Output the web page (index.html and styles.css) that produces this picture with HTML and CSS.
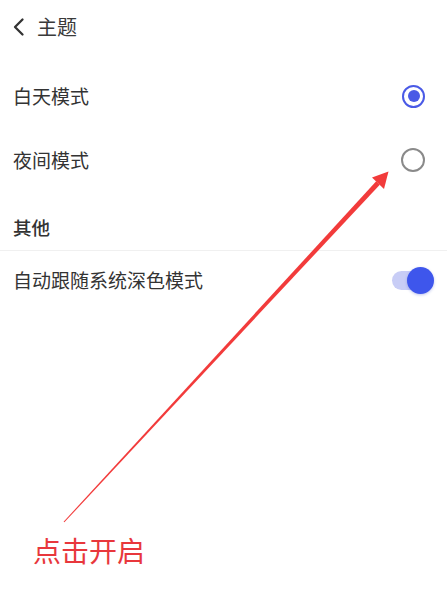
FILE: index.html
```html
<!DOCTYPE html>
<html lang="zh-CN">
<head>
<meta charset="utf-8">
<title>主题</title>
<link rel="stylesheet" href="styles.css">
</head>
<body>
<div class="page">
  <header class="header">
    <svg class="back" width="14" height="20" viewBox="0 0 14 20"><path d="M10.5 2.5 L3 10 L10.5 17.5" fill="none" stroke="#333" stroke-width="2.3" stroke-linecap="round" stroke-linejoin="round"/></svg>
    <span class="title">主题</span>
  </header>
  <div class="row first">
    <span class="label">白天模式</span>
    <span class="radio checked"></span>
  </div>
  <div class="row">
    <span class="label">夜间模式</span>
    <span class="radio"></span>
  </div>
  <div class="section">其他</div>
  <div class="row toggle-row">
    <span class="label">自动跟随系统深色模式</span>
    <span class="switch"><span class="knob"></span></span>
  </div>

  <svg class="arrow" width="447" height="603" viewBox="0 0 447 603">
    <polygon points="63.6,521.7 64.4,522.3 379.8,184.7 376.2,181.3" fill="#f23b3b"/>
    <polygon points="388.5,171.5 372,177.5 384,189" fill="#f23b3b"/>
  </svg>
  <div class="note">点击开启</div>
</div>
</body>
</html>
```
FILE: styles.css
```css
html, body {
  margin: 0;
  padding: 0;
  background: #ffffff;
}
.page {
  position: relative;
  width: 447px;
  height: 603px;
  overflow: hidden;
  font-family: "Noto Sans CJK SC", "Noto Sans", sans-serif;
  color: #333333;
}
.header {
  height: 54px;
  display: flex;
  align-items: center;
  padding-left: 12px;
  gap: 11px;
}
.back {
  display: block;
}
.title {
  font-size: 20px;
  line-height: 26px;
  color: #3a3a3a;
}
.row {
  height: 64px;
  display: flex;
  align-items: center;
  justify-content: space-between;
  padding: 0 22px 0 13px;
}
.row.first {
  margin-top: 10px;
}
.label {
  font-size: 19px;
  line-height: 26px;
}
.radio {
  width: 20px;
  height: 20px;
  border: 2px solid #8a8a8a;
  border-radius: 50%;
  box-sizing: content-box;
  display: flex;
  align-items: center;
  justify-content: center;
}
.radio.checked {
  border: 2.5px solid #4a5ae6;
  width: 19px;
  height: 19px;
}
.radio.checked::after {
  content: "";
  width: 12px;
  height: 12px;
  border-radius: 50%;
  background: #4a5ae6;
}
.section {
  font-size: 18.5px;
  font-weight: 500;
  line-height: 26px;
  padding: 22px 13px 10px;
  border-bottom: 1px solid #f0f0f0;
}
.toggle-row {
  height: 58px;
  padding-right: 13px;
}
.switch {
  position: relative;
  width: 34px;
  height: 19px;
  border-radius: 10px;
  background: #c8cdf6;
  margin-right: 8px;
}
.knob {
  position: absolute;
  right: -8px;
  top: -4px;
  width: 27px;
  height: 27px;
  border-radius: 50%;
  background: #3e56ec;
  box-shadow: 0 1px 3px rgba(40, 60, 200, 0.3);
}
.arrow {
  position: absolute;
  left: 0;
  top: 0;
}
.note {
  position: absolute;
  left: 33px;
  top: 530px;
  font-size: 28px;
  line-height: 40px;
  color: #e8373c;
}
```
